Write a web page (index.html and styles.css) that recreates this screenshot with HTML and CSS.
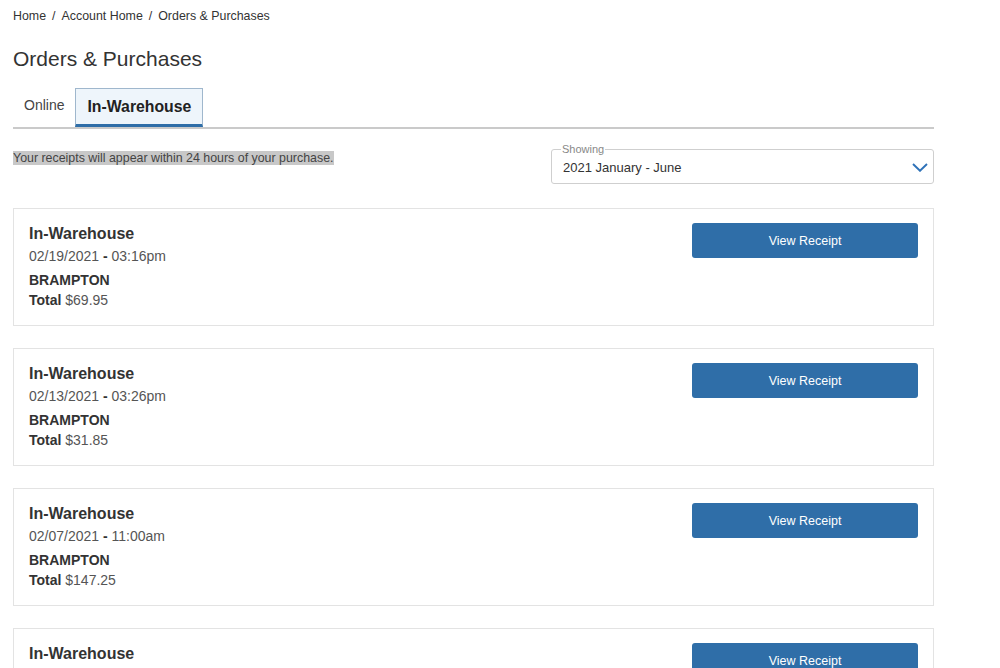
FILE: index.html
```html
<!DOCTYPE html>
<html>
<head>
<meta charset="utf-8">
<link rel="stylesheet" href="styles.css">
</head>
<body>
<div class="page">
  <nav class="crumbs"><a>Home</a><span class="sep">/</span><a>Account Home</a><span class="sep">/</span><span>Orders &amp; Purchases</span></nav>
  <h1 class="title">Orders &amp; Purchases</h1>
  <div class="tabs">
    <div class="tab">Online</div>
    <div class="tab active">In-Warehouse</div>
  </div>
  <div class="toolbar">
    <p class="note"><span>Your receipts will appear within 24 hours of your purchase.</span></p>
    <fieldset class="select">
      <legend>Showing</legend>
      <span class="value">2021 January - June</span>
      <svg class="chev" width="16" height="9" viewBox="0 0 16 9"><path d="M1 1 L8 7.8 L15 1" fill="none" stroke="#2f72b8" stroke-width="1.9"/></svg>
    </fieldset>
  </div>
  <div class="list">
    <div class="card">
      <div class="info">
        <div class="kind">In-Warehouse</div>
        <div class="date">02/19/2021 <b>-</b> 03:16pm</div>
        <div class="store">BRAMPTON</div>
        <div class="total"><b>Total</b> $69.95</div>
      </div>
      <button class="btn">View Receipt</button>
    </div>
    <div class="card">
      <div class="info">
        <div class="kind">In-Warehouse</div>
        <div class="date">02/13/2021 <b>-</b> 03:26pm</div>
        <div class="store">BRAMPTON</div>
        <div class="total"><b>Total</b> $31.85</div>
      </div>
      <button class="btn">View Receipt</button>
    </div>
    <div class="card">
      <div class="info">
        <div class="kind">In-Warehouse</div>
        <div class="date">02/07/2021 <b>-</b> 11:00am</div>
        <div class="store">BRAMPTON</div>
        <div class="total"><b>Total</b> $147.25</div>
      </div>
      <button class="btn">View Receipt</button>
    </div>
    <div class="card">
      <div class="info">
        <div class="kind">In-Warehouse</div>
      </div>
      <button class="btn">View Receipt</button>
    </div>
  </div>
</div>
</body>
</html>
```
FILE: styles.css
```css
html, body {
  margin: 0;
  padding: 0;
  background: #fff;
}
body {
  font-family: "Liberation Sans", Arial, sans-serif;
  color: #333;
}
.page {
  width: 921px;
  padding: 8px 0 0 13px;
}
.crumbs {
  font-size: 12.4px;
  line-height: 16px;
  color: #333;
}
.crumbs .sep {
  margin: 0 6px;
}
.title {
  font-size: 21px;
  font-weight: normal;
  line-height: 26px;
  margin: 22px 0 0;
  color: #333;
}
.tabs {
  display: flex;
  align-items: flex-end;
  margin-top: 16px;
  border-bottom: 2px solid #cacaca;
}
.tab {
  font-size: 14px;
  color: #444;
  padding: 0 11px;
  height: 39px;
  line-height: 35px;
}
.tab.active {
  box-sizing: border-box;
  font-weight: bold;
  font-size: 15.8px;
  color: #222;
  background: #eef5fb;
  border: 1px solid #9fb7cd;
  border-bottom: 3px solid #2f6ea8;
  padding: 0 11px;
  height: 39px;
  line-height: 35px;
}
.toolbar {
  display: flex;
  justify-content: space-between;
  align-items: flex-start;
  margin-top: 15px;
}
.note {
  margin: 7px 0 0;
  font-size: 12.4px;
  line-height: 15px;
  color: #444;
}
.note span {
  background: #c8c8c8;
}
.select {
  box-sizing: border-box;
  width: 383px;
  height: 40px;
  margin: 0;
  padding: 0 5px 0 11px;
  border: 1px solid #cfcfcf;
  border-radius: 3px;
  display: flex;
  align-items: center;
  justify-content: space-between;
}
.select legend {
  font-size: 11px;
  color: #888;
  padding: 0 1px;
  margin-left: -2px;
  line-height: 11px;
}
.select .value {
  font-size: 13px;
  color: #333;
  margin-top: -4px;
}
.select .chev {
  margin-top: -4px;
}
.list {
  margin-top: 24px;
  display: flex;
  flex-direction: column;
  gap: 22px;
}
.card {
  box-sizing: border-box;
  height: 118px;
  border: 1px solid #e3e3e3;
  display: flex;
  justify-content: space-between;
  align-items: flex-start;
  padding: 14px 14px 0 15px;
}
.info {
  padding-top: 1px;
}
.kind {
  font-size: 16px;
  font-weight: bold;
  line-height: 20px;
  color: #333;
}
.date {
  font-size: 14px;
  line-height: 22px;
  margin-top: 1px;
  color: #555;
}
.date b {
  color: #333;
}
.store {
  font-size: 14px;
  font-weight: bold;
  line-height: 20px;
  margin-top: 3px;
  color: #333;
}
.total {
  font-size: 14px;
  line-height: 21px;
  color: #555;
}
.total b {
  color: #333;
}
.btn {
  width: 226px;
  height: 35px;
  margin-right: 1px;
  border: 0;
  border-radius: 3px;
  background: #2f6ea8;
  color: #fff;
  font-family: "Liberation Sans", Arial, sans-serif;
  font-size: 12.5px;
  cursor: pointer;
}
```
